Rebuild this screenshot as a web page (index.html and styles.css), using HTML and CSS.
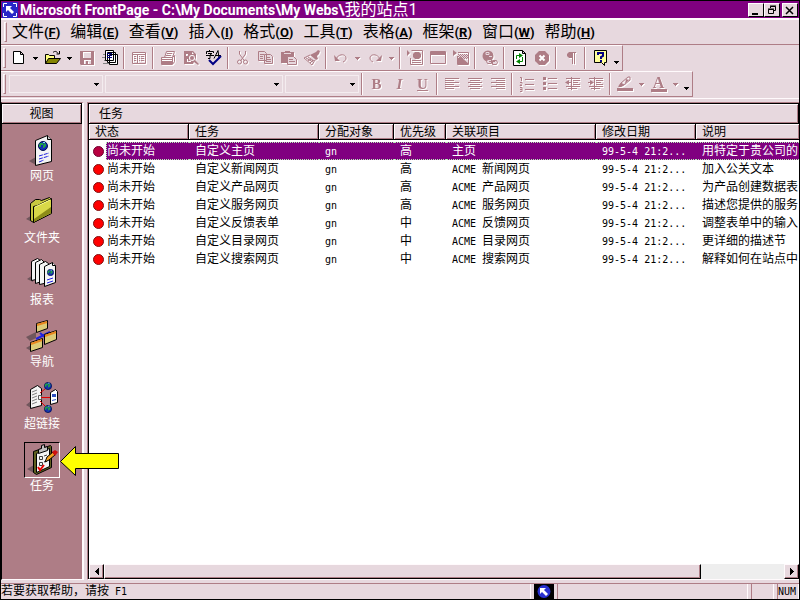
FILE: index.html
```html
<!DOCTYPE html>
<html lang="zh-CN">
<head>
<meta charset="utf-8">
<title>Microsoft FrontPage</title>
<link rel="stylesheet" href="styles.css">
</head>
<body>
<svg class="defs" aria-hidden="true">
  <symbol id="drop" viewBox="0 0 5 3"><path d="M0 0h5v1H4v1H3v1H2V2H1V1H0z" fill="currentColor"/></symbol>
  <symbol id="lefthead" viewBox="0 0 4 7"><path d="M3 0h1v7H3V6H2V5H1V4H0V3h1V2h1V1h1z" fill="currentColor"/></symbol>
  <symbol id="globe" viewBox="0 0 10 10"><circle cx="5" cy="5" r="4.500" fill="#1428b8" stroke="#001050"/><path d="M2 2h3v2H3v2H1V4zM6 2l2 1v2l-2 2H5V5zM3 7l2 1H4z" fill="#20a048"/><path d="M5 1h2v1H5z" fill="#8ce0ff"/></symbol>
</svg>
<div class="window">
  <header class="title">
    <svg class="appicon" viewBox="0 0 16 16"><path fill="#2828c8" d="M0 0h16v16H0z"/><path fill="none" stroke="#fff" d="M5 1.500H1.500V5M11 1.500h3.500V5M1.500 11v3.500H5M14.500 11v3.500H11"/><path fill="#fff" d="M4 4h6L8 6l4 4-2 2-4-4-2 2z"/></svg>
    <h1>Microsoft FrontPage - C:\My Documents\My Webs\<span>我的站点1</span></h1>
    <button class="cap" aria-label="最小化"><svg viewBox="0 0 12 11"><path d="M2 8h6v2H2z"/></svg></button>
    <button class="cap" aria-label="还原"><svg viewBox="0 0 12 11"><path fill="none" stroke="#000" d="M4.500 3V1.500h5v4H8M4 1h6M2.500 4.500h5v4h-5zM2 4h6"/></svg></button>
    <button class="cap close" aria-label="关闭"><svg viewBox="0 0 12 11"><path fill="none" stroke="#000" stroke-width="1.500" d="M2 2l7 7M9 2l-7 7"/></svg></button>
  </header>

  <nav class="menu">
    <i class="grip"></i>
    <button>文件<b>(<u>F</u>)</b></button><button>编辑<b>(<u>E</u>)</b></button><button>查看<b>(<u>V</u>)</b></button><button>插入<b>(<u>I</u>)</b></button><button>格式<b>(<u>O</u>)</b></button><button>工具<b>(<u>T</u>)</b></button><button>表格<b>(<u>A</u>)</b></button><button>框架<b>(<u>R</u>)</b></button><button>窗口<b>(<u>W</u>)</b></button><button>帮助<b>(<u>H</u>)</b></button>
  </nav>

  <div class="bar" role="toolbar">
    <i class="grip"></i>
    <button class="tool" aria-label="新建"><svg viewBox="0 0 16 16"><path fill="#fff" stroke="#000" d="M2.500 1.500h7l3 3v9h-10zM9.500 1.500v3h3"/></svg></button>
    <button class="arrow" aria-label="新建选项"><svg><use href="#drop"/></svg></button>
    <button class="tool" aria-label="打开"><svg viewBox="0 0 16 16"><path fill="#ffff80" stroke="#000" d="M.5 13.500v-9h3l1 1h5v3"/><path fill="#848400" stroke="#000" d="M.5 13.500l3-5h12l-4 5z"/><path fill="none" stroke="#000" d="M8 2.500c2-2 4-1 5 1M14.500 1v3h-3"/></svg></button>
    <button class="arrow" aria-label="打开选项"><svg><use href="#drop"/></svg></button>
    <button class="tool off" aria-label="保存"><svg viewBox="0 0 16 16"><path fill="currentColor" fill-rule="evenodd" d="M1 1h14v14H2l-1-1zM4 2v6h8V2zM5 10v4h2v-3h2v3h3v-4z"/></svg></button>
    <button class="tool" aria-label="发布"><svg viewBox="0 0 16 16"><path stroke="#848484" d="M1 4.500h4M0 7.500h4M2 10.500h4M1 13.500h6"/><path fill="#fff" stroke="#000" d="M7.500 4.500h8v10h-8zM5.500 2.500h8v10h-8zM3.500.5h8v10h-8z"/><path stroke="#000080" d="M5 3.500h5M5 5.500h5M5 7.500h5"/></svg></button>
    <i class="sep"></i>
    <button class="tool off" aria-label="文件夹列表"><svg viewBox="0 0 16 16"><path fill="none" stroke="currentColor" d="M1.500 2.500h13v11h-13zM1 4.500h14M6.500 4v9M3 6.500h2M3 8.500h2M3 10.500h2M8 6.500h1M10 6.500h3M8 8.500h1M10 8.500h3M8 10.500h1M10 10.500h3"/></svg></button>
    <i class="sep"></i>
    <button class="tool off" aria-label="打印"><svg viewBox="0 0 16 16"><path fill="none" stroke="currentColor" d="M4.500 7.500l2-6h8l-2 6M7 3.500h5M6 5.500h5M1.500 7.500h11l2-2v6l-2 3h-11zM1 9.500h12M12.500 8v6"/><path fill="currentColor" d="M2 11h10v3H2z"/></svg></button>
    <button class="tool off" aria-label="预览"><svg viewBox="0 0 16 16"><path fill="currentColor" fill-rule="evenodd" d="M1 1h9l3 3v4l-1 2 4 4-1 1-4-3-1 2H1zM9 2v2h2zM3 4h2v2H3zM3 9h1v3h4v-1H5V9zM9 5a3 3 0 1 0 .1 6A3 3 0 0 0 9 5z"/><circle cx="9" cy="8" r="2" fill="currentColor"/></svg></button>
    <button class="tool" aria-label="拼写检查"><svg viewBox="0 0 16 16"><path fill="none" stroke="#000" d="M3.500 0v2M.5 4V1.500h7V3M2 3.500h4L4 5v3.500H2M0 5.500h8M8 8.500l4-8 1 8M10 5.500h5"/><path fill="none" stroke="#000084" stroke-width="2" d="M3 10l4 4 8-8"/></svg></button>
    <i class="sep"></i>
    <button class="tool off" aria-label="剪切"><svg viewBox="0 0 16 16"><path fill="none" stroke="currentColor" d="M4.500 1v3l5 7M10.500 1v3l-5 7"/><circle cx="4.500" cy="12" r="2" fill="none" stroke="currentColor"/><circle cx="10.500" cy="12" r="2" fill="none" stroke="currentColor"/></svg></button>
    <button class="tool off" aria-label="复制"><svg viewBox="0 0 16 16"><path fill="#e7d8de" stroke="currentColor" d="M.5 1.500h6l2 2v7h-8zM6.500 4.500h6l2 2v7h-8z"/><path stroke="currentColor" d="M2 4.500h4M2 6.500h3M2 8.500h3M8 7.500h4M8 9.500h5M8 11.500h5"/></svg></button>
    <button class="tool off" aria-label="粘贴"><svg viewBox="0 0 16 16"><path fill="currentColor" d="M0 2h4V1h5v1h4v11H0z"/><path stroke="#e7d8de" d="M3 3.500h7"/><path fill="#e7d8de" stroke="currentColor" d="M6.500 6.500h6l3 3v5h-9z"/><path stroke="currentColor" d="M8 9.500h4M8 11.500h6"/></svg></button>
    <button class="tool off" aria-label="格式刷"><svg viewBox="0 0 16 16"><path fill="currentColor" d="M12 2l2-2 2 1-1 3-2 2 1 3-2 1-6-5 2-1z"/><path fill="none" stroke="currentColor" d="M6 5L0 8l8 7 3-5M2 8l7 4M4 7l6 4M4 11l3-2M6 13l3-3"/></svg></button>
    <i class="sep"></i>
    <button class="tool off" aria-label="撤消"><svg viewBox="0 0 16 16"><path fill="none" stroke="currentColor" d="M3 9c3-6 10-5 10-1 0 2-1 3-3 4"/><path fill="currentColor" d="M1 5l1 6h5z"/></svg></button>
    <button class="arrow off" aria-label="撤消选项"><svg><use href="#drop"/></svg></button>
    <button class="tool off" aria-label="恢复"><svg viewBox="0 0 16 16"><path fill="none" stroke="currentColor" d="M13 9C10 3 3 4 3 8c0 2 1 3 3 4"/><path fill="currentColor" d="M15 5l-1 6H9z"/></svg></button>
    <button class="arrow off" aria-label="恢复选项"><svg><use href="#drop"/></svg></button>
    <i class="sep"></i>
    <button class="tool off" aria-label="插入组件"><svg viewBox="0 0 16 16"><path fill="currentColor" d="M0 0l3 3-3 3z"/><path fill="none" stroke="currentColor" d="M4.500.5h11v14h-12V8M5 10.500h9M5 12.500h9"/><path fill="currentColor" d="M8 2h4l2 2v3l-2 2H8L6 7V4z"/></svg></button>
    <button class="tool off" aria-label="插入表格"><svg viewBox="0 0 16 16"><path fill="none" stroke="currentColor" d="M.5 1.500h15v12H.5z"/><path fill="currentColor" d="M1 2h14v3H1z"/></svg></button>
    <button class="tool off" aria-label="插入图片"><svg viewBox="0 0 16 16"><path fill="currentColor" d="M0 0l4 3-4 3z"/><path fill="none" stroke="currentColor" d="M5 2.500h10.500v12h-11V6"/><path fill="none" stroke="currentColor" stroke-dasharray="1 1" d="M5 4.500h10M6 5.500h10M5 6.500h10M6 7.500h10M5 8.500h10"/><path fill="currentColor" d="M5 8l3-1 7 6v1H5z"/></svg></button>
    <i class="sep"></i>
    <button class="tool off" aria-label="超链接"><svg viewBox="0 0 16 16"><circle cx="6" cy="6" r="5.500" fill="currentColor"/><path stroke="#e7d8de" fill="none" d="M4 2.500h3v2H4zM7 6.500h3"/><path fill="#e7d8de" stroke="currentColor" d="M5.500 9.500h4v4h-4l-1-2zM10.500 10.500h4l1 2-1 2h-4z"/><path stroke="currentColor" d="M7 11.500h6"/></svg></button>
    <i class="sep"></i>
    <button class="tool" aria-label="刷新"><svg viewBox="0 0 16 16"><path fill="#fff" stroke="#000" d="M2.500.5h9l3 3v12h-12zM11.500.5v3h3"/><path fill="none" stroke="#008400" d="M5.500 9V5.500H10M11.500 7v4.500H7"/><path fill="#008400" d="M8 3l4 2.500L8 8zM9 9l-4 2.500L9 14z"/></svg></button>
    <button class="tool off" aria-label="停止"><svg viewBox="0 0 16 16"><path fill="currentColor" d="M5 1h6l4 4v6l-4 4H5l-4-4V5z"/><path stroke="#fff" stroke-width="2" d="M5.500 5.500l5 5M10.500 5.500l-5 5"/></svg></button>
    <i class="sep"></i>
    <button class="tool off" aria-label="显示标记"><svg viewBox="0 0 16 16"><path fill="currentColor" d="M6 2h7v1h-1v11h-1V3h-1v11H9V8H6L4 6V4z"/></svg></button>
    <i class="sep"></i>
    <button class="tool" aria-label="帮助"><svg viewBox="0 0 16 16"><path fill="#ffff9c" stroke="#000" d="M2.500.5h12v12h-2v3l-3-3h-7z"/><path fill="none" stroke="#000084" stroke-width="2" d="M6 5V3h5v3L9 7v2M8 11h2"/></svg></button>
    <button class="arrow more" aria-label="其他按钮"><svg><use href="#drop"/></svg></button>
  </div>

  <div class="bar format" role="toolbar">
    <i class="grip"></i>
    <label class="combo style"><select aria-label="样式"><option></option></select><svg><use href="#drop"/></svg></label>
    <label class="combo face"><select aria-label="字体"><option></option></select><svg><use href="#drop"/></svg></label>
    <label class="combo size"><select aria-label="字号"><option></option></select><svg><use href="#drop"/></svg></label>
    <i class="sep"></i>
    <button class="tool off letter"><b>B</b></button>
    <button class="tool off letter"><em>I</em></button>
    <button class="tool off letter"><u>U</u></button>
    <i class="sep"></i>
    <button class="tool off" aria-label="左对齐"><svg viewBox="0 0 16 16"><path stroke="currentColor" d="M1 2.500h14M1 4.500h9M1 6.500h14M1 8.500h9M1 10.500h14M1 12.500h9"/></svg></button>
    <button class="tool off" aria-label="居中"><svg viewBox="0 0 16 16"><path stroke="currentColor" d="M1 2.500h14M3 4.500h10M1 6.500h14M3 8.500h10M1 10.500h14M3 12.500h10"/></svg></button>
    <button class="tool off" aria-label="右对齐"><svg viewBox="0 0 16 16"><path stroke="currentColor" d="M1 2.500h14M6 4.500h9M1 6.500h14M6 8.500h9M1 10.500h14M6 12.500h9"/></svg></button>
    <i class="sep"></i>
    <button class="tool off" aria-label="编号"><svg viewBox="0 0 16 16"><path fill="none" stroke="currentColor" d="M6 3.500h9M6 8.500h9M6 13.500h9M1 1.500h1.500V5M1 6.500h2v1L1 9.500h2M1 11.500h2v4H1M1 13.500h2"/></svg></button>
    <button class="tool off" aria-label="项目符号"><svg viewBox="0 0 16 16"><path fill="currentColor" d="M1 1h3v3H1zM1 6h3v3H1zM1 11h3v3H1zM6 2h9v1H6zM6 7h9v1H6zM6 12h9v1H6z"/></svg></button>
    <button class="tool off" aria-label="减少缩进"><svg viewBox="0 0 16 16"><path stroke="currentColor" d="M1 2.500h14M8 4.500h7M8 6.500h5M8 8.500h7M1 10.500h14M3 12.500h9M1 6.500h5M6.500 1v13"/><path fill="currentColor" d="M0 6.500L4 4v5z"/></svg></button>
    <button class="tool off" aria-label="增加缩进"><svg viewBox="0 0 16 16"><path stroke="currentColor" d="M1 2.500h14M8 4.500h7M8 6.500h5M8 8.500h7M1 10.500h14M3 12.500h9M0 6.500h5M6.500 1v13"/><path fill="currentColor" d="M6 6.500L2 4v5z"/></svg></button>
    <i class="sep"></i>
    <button class="tool off" aria-label="突出显示"><svg viewBox="0 0 16 16"><path fill="currentColor" d="M0 12h16v3H0z"/><path fill="none" stroke="currentColor" d="M4 7l7-6h2v3L7 9zM4 7l-2 3h3l2-1"/><path fill="currentColor" d="M4 7l3 2-3 2H1zM9 3l3 1-4 4z"/></svg></button>
    <button class="arrow off" aria-label="突出显示颜色"><svg><use href="#drop"/></svg></button>
    <button class="tool off fontcolor"><b>A</b></button>
    <button class="arrow off" aria-label="字体颜色"><svg><use href="#drop"/></svg></button>
    <button class="arrow more" aria-label="其他格式按钮"><svg><use href="#drop"/></svg></button>
  </div>

  <main class="work">
    <aside class="views">
      <h2>视图</h2>
      <nav>
        <button><span class="pic"><svg viewBox="0 0 32 32"><path fill="#70565c" d="M3 27l7-4v8z"/><path fill="#f4f4f4" stroke="#000" d="M9.500 6.500l12-5 4 4v22l-16 4z"/><path fill="#c8c8c8" stroke="#000" d="M21.500 1.500v4h4"/><use href="#globe" x="12" y="7" width="10" height="10"/><path stroke="#2020e0" stroke-dasharray="4 1" d="M13 22l10-3M13 25l10-3M13 28l5-2"/></svg></span>网页</button>
        <button><span class="pic"><svg viewBox="0 0 32 32"><path fill="#70565c" d="M0 23l6-4v7z"/><path fill="#c8c840" stroke="#000" d="M4.500 7.500l5-4h4l2 1 8-3 1 1v15L7.500 26.500l-3-2z"/><path fill="#d8d848" stroke="#000" d="M7.500 10.500l4-1 14-7v15l-18 9z"/><path fill="#8c8c18" d="M8 23l17-12v6L8 26z"/><path stroke="#ffff90" d="M9 11l15-7"/></svg></span>文件夹</button>
        <button><span class="pic"><svg viewBox="0 0 32 32"><path fill="#70565c" d="M1 21l6-4v7z"/><g fill="#f4f4f4" stroke="#000"><path d="M5.500 3.500l6-3 3 2v18l-9 2z"/><path d="M9.500 4.500l6-3 3 3v18l-9 3z"/><path d="M13.500 6.500l6-3 3 2v19l-9 2z"/><path d="M18.500 8.500l8-4 3 3v17l-11 4z"/><path d="M26.500 4.500v3h3"/></g><use href="#globe" x="21" y="11" width="7" height="7"/><path stroke="#2020e0" d="M21 22l6-2M21 25l6-2"/></svg></span>报表</button>
        <button><span class="pic"><svg viewBox="0 0 32 32"><path fill="#70565c" d="M0 17l10-5v6l-6 3zM0 28l5-3v6z"/><path fill="none" stroke="#2020e0" stroke-width="2" d="M10 19l14-7M14 13l6 5"/><g fill="#dccc78" stroke="#000"><path d="M10.500 3.500l11-3v8l-11 4zM18.500 14.500l12-4v9l-12 5zM4.500 22.500l12-4v9l-12 4z"/></g><path stroke="#e88820" stroke-width="2" d="M11 5l10-3M19 16l11-4M5 24l11-4"/></svg></span>导航</button>
        <button><span class="pic"><svg viewBox="0 0 32 32"><path fill="#70565c" d="M0 23l5-4v7z"/><path fill="#f4f4f4" stroke="#000" d="M4.500 7.500l7-4 4 3v17l-11 3z"/><path fill="#fff" stroke="#000" d="M24.500 10.500l5-3 2 2v11l-7 2z"/><path stroke="#808080" d="M6 10l5-2M6 13l5-2M6 16l5-2M6 19l5-2M6 22l5-2"/><path fill="none" stroke="#606060" d="M12.500 13.500h3v4h-3z"/><path fill="none" stroke="#e00000" d="M14 11l5-4M15 15.500h9M14 19l5 5"/><path fill="#3050c0" d="M26 12h4v3h-4zM26 18l4-1v1l-4 1z"/><use href="#globe" x="18" y="0" width="8" height="8"/><use href="#globe" x="18" y="23" width="8" height="8"/></svg></span>超链接</button>
        <button class="on"><span class="pic"><svg viewBox="0 0 32 32"><path fill="#70565c" d="M1 25l7-4v8z"/><path fill="#606020" stroke="#000" d="M7.500 7.500l17-6 1 1v21l-15 7-3-2z"/><path fill="#f4f4f4" stroke="#000" d="M10.500 9.500l13-5v18l-13 6z"/><path fill="#c0c0c0" stroke="#000" d="M12.500 5.500l3-1V1.500l3-1v3l3-1v4l-9 3z"/><path fill="none" stroke="#404040" d="M13.500 12.500h3v3h-3zM13.500 18.500h3v3h-3zM18 12l3-1M18 18l3-1"/><path fill="none" stroke="#f00000" stroke-width="2" d="M12 23l2 3 4-5"/><path fill="#f0a020" stroke="#000" d="M19 18l2-5 6-5 2 3-6 5z"/><path fill="#d01010" d="M26 8l3-2 3 2-3 4z"/></svg></span>任务
          <svg class="pointer" viewBox="0 0 60 32"><path fill="#ff0" stroke="#000" d="M.5 15.500L15.500.5v7h43v15h-43v7z"/></svg></button>
      </nav>
    </aside>

    <section class="tasks">
      <h2>任务</h2>
      <div class="list">
        <table>
          <colgroup><col class="c1"><col class="c2"><col class="c3"><col class="c4"><col class="c5"><col class="c6"><col></colgroup>
          <thead><tr><th>状态</th><th>任务</th><th>分配对象</th><th>优先级</th><th>关联项目</th><th>修改日期</th><th>说明</th></tr></thead>
          <tbody>
            <tr class="sel"><td><div class="state"><i class="dot"></i><span>尚未开始</span></div></td><td>自定义主页</td><td><kbd>gn</kbd></td><td>高</td><td>主页</td><td><kbd>99-5-4 21:2...</kbd></td><td>用特定于贵公司的</td></tr>
            <tr><td><div class="state"><i class="dot"></i><span>尚未开始</span></div></td><td>自定义新闻网页</td><td><kbd>gn</kbd></td><td>高</td><td><kbd>ACME </kbd>新闻网页</td><td><kbd>99-5-4 21:2...</kbd></td><td>加入公关文本</td></tr>
            <tr><td><div class="state"><i class="dot"></i><span>尚未开始</span></div></td><td>自定义产品网页</td><td><kbd>gn</kbd></td><td>高</td><td><kbd>ACME </kbd>产品网页</td><td><kbd>99-5-4 21:2...</kbd></td><td>为产品创建数据表</td></tr>
            <tr><td><div class="state"><i class="dot"></i><span>尚未开始</span></div></td><td>自定义服务网页</td><td><kbd>gn</kbd></td><td>高</td><td><kbd>ACME </kbd>服务网页</td><td><kbd>99-5-4 21:2...</kbd></td><td>描述您提供的服务</td></tr>
            <tr><td><div class="state"><i class="dot"></i><span>尚未开始</span></div></td><td>自定义反馈表单</td><td><kbd>gn</kbd></td><td>中</td><td><kbd>ACME </kbd>反馈网页</td><td><kbd>99-5-4 21:2...</kbd></td><td>调整表单中的输入</td></tr>
            <tr><td><div class="state"><i class="dot"></i><span>尚未开始</span></div></td><td>自定义目录网页</td><td><kbd>gn</kbd></td><td>中</td><td><kbd>ACME </kbd>目录网页</td><td><kbd>99-5-4 21:2...</kbd></td><td>更详细的描述节</td></tr>
            <tr><td><div class="state"><i class="dot"></i><span>尚未开始</span></div></td><td>自定义搜索网页</td><td><kbd>gn</kbd></td><td>中</td><td><kbd>ACME </kbd>搜索网页</td><td><kbd>99-5-4 21:2...</kbd></td><td>解释如何在站点中</td></tr>
          </tbody>
        </table>
      </div>
      <div class="scroll">
        <button aria-label="向左滚动"><svg viewBox="0 0 4 7"><use href="#lefthead"/></svg></button>
        <i class="thumb"></i>
        <i class="track"></i>
        <button class="right" aria-label="向右滚动"><svg viewBox="0 0 4 7"><use href="#lefthead"/></svg></button>
      </div>
    </section>
  </main>

  <footer class="status">
    <p class="message">若要获取帮助，请按<kbd> F1</kbd></p>
    <svg class="online" viewBox="0 0 20 15"><path d="M0 0h20v15H0z"/><circle cx="10" cy="7.500" r="6.500" fill="#2830d0"/><path fill="#fff" d="M6 4h6l-2 2 4 4-2 2-4-4-2 2z"/></svg>
    <p class="wide"></p>
    <p class="narrow"></p>
    <p class="num"><kbd>NUM</kbd></p>
  </footer>
</div>
</body>
</html>
```
FILE: styles.css
```css
:root {
  --face: #e7d8de;
  --shade: #ae7d86;
  --light: #fffafc;
  --purple: #800080;
  --focus: #b8f0b8;
}

* { box-sizing: border-box; }

body {
  margin: 0;
  font: 12px/16px "Liberation Sans", "Noto Sans CJK SC", sans-serif;
  color: #000;
}

h1, h2, p { margin: 0; font-size: 12px; font-weight: 400; }
svg { display: block; }
kbd { font: 10px/10px "DejaVu Sans Mono", monospace; white-space: pre; }

button {
  margin: 0;
  padding: 0;
  border: 0;
  background: none;
  color: inherit;
  font: inherit;
}

.defs { position: absolute; width: 0; height: 0; }

.window {
  display: flex;
  flex-direction: column;
  height: 100vh;
  border: 1px solid #000;
  background: var(--face);
  overflow: hidden;
}

/* Title bar */
.title {
  display: flex;
  align-items: center;
  flex: none;
  height: 17px;
  padding: 0 1px;
  background: var(--purple);
  color: #fff;
}
.appicon { width: 16px; height: 16px; margin-right: 2px; }
.title h1 {
  flex: 1;
  font: 700 14px/17px Roboto, "Noto Sans CJK SC", sans-serif;
  white-space: nowrap;
  overflow: hidden;
}
.title h1 span { font-size: 16px; font-weight: 400; }
.cap {
  display: flex;
  width: 16px;
  height: 14px;
  padding: 1px;
  background: var(--face);
  border: 1px solid;
  border-color: #fff #000 #000 #fff;
}
.cap svg { width: 12px; height: 11px; }
.close { margin-left: 2px; }

/* Menu */
.menu {
  display: flex;
  align-items: center;
  flex: none;
  gap: 10px;
  height: 27px;
  padding-left: 3px;
  border-top: 2px solid var(--light);
  border-bottom: 1px solid var(--shade);
}
.menu button { font-size: 16px; line-height: 24px; white-space: nowrap; }
.menu b { font-family: Roboto, sans-serif; font-size: 13px; }
.grip {
  flex: none;
  width: 3px;
  height: 20px;
  border: 1px solid;
  border-color: var(--light) var(--shade) var(--shade) var(--light);
}
.menu .grip { margin-right: -5px; }

/* Toolbars */
.bar {
  display: flex;
  align-items: center;
  align-self: flex-start;
  flex: none;
  height: 26px;
  padding-left: 2px;
  border: solid;
  border-width: 1px 1px 1px 0;
  border-color: var(--light) var(--shade) var(--shade);
}
.bar .grip { margin-right: 1px; }
.tool {
  display: flex;
  align-items: center;
  justify-content: center;
  flex: none;
  width: 23px;
  height: 22px;
}
.tool svg { width: 16px; height: 16px; }
.off { color: var(--shade); filter: drop-shadow(1px 1px 0 #fff); }
.arrow { flex: none; width: 11px; height: 22px; padding-left: 3px; }
.arrow svg, .combo svg { width: 5px; height: 3px; }
.arrow.more { padding-top: 8px; }
.sep {
  flex: none;
  width: 2px;
  height: 22px;
  margin: 0 2px;
  background: linear-gradient(90deg, var(--shade) 50%, var(--light) 50%);
}
.letter { font: 15px/18px "Liberation Serif", serif; }
.letter em { font-weight: 700; }
.letter u { font-weight: 700; }
.fontcolor { font: 16px/12px "Liberation Serif", serif; }
.fontcolor b { width: 16px; border-bottom: 3px solid var(--shade); }

.combo {
  display: grid;
  align-items: center;
  flex: none;
  height: 18px;
  margin-right: 2px;
}
.combo select, .combo svg { grid-area: 1 / 1; }
.combo select {
  appearance: none;
  width: 100%;
  height: 18px;
  border: 1px solid #f4ecef;
  border-radius: 0;
  background: var(--face);
}
.combo svg { justify-self: end; margin-right: 4px; pointer-events: none; }
.format .grip { margin-right: 3px; }
.style { width: 94px; }
.face { width: 178px; }
.size { width: 74px; margin-right: 0; }

/* Work area */
.work {
  display: flex;
  flex: 1;
  min-height: 0;
  margin-top: 1px;
  padding-bottom: 3px;
  border-top: 1px solid var(--light);
  border-bottom: 1px solid var(--shade);
}
.views {
  flex: none;
  display: flex;
  flex-direction: column;
  width: 83px;
  margin-top: 3px;
  border: solid;
  border-width: 1px 2px 1px 1px;
  border-color: var(--shade) var(--light) var(--light) #000;
  background: var(--shade);
}
.views h2, .tasks h2 {
  height: 21px;
  line-height: 20px;
  background: var(--face);
  border: 1px solid #000;
  box-shadow: inset 1px 1px 0 var(--light), inset -1px -1px 0 var(--shade);
}
.views h2 { border-left: 0; text-align: center; }
.views nav { padding-top: 3px; }
.views button {
  position: relative;
  display: block;
  width: 100%;
  height: 62px;
  color: #fff;
  line-height: 16px;
  text-align: center;
}
.pic { display: block; width: 36px; height: 36px; margin: 0 auto; border: 1px solid transparent; padding: 1px; }
.pic svg { width: 32px; height: 32px; }
.on .pic { border-color: #000 #fff #fff #000; }
.pointer { position: absolute; top: 9px; left: 58px; width: 60px; height: 32px; z-index: 1; }

.tasks {
  flex: 1;
  display: flex;
  flex-direction: column;
  min-width: 0;
  margin: 3px 0 0 3px;
  border: solid;
  border-width: 1px 0 1px 1px;
  border-color: var(--shade) var(--light) var(--light) var(--shade);
}
.tasks h2 { padding-left: 10px; }
.list { flex: 1; min-height: 0; overflow: hidden; background: #fff; border-left: 1px solid #000; }
table { width: 100%; table-layout: fixed; border-collapse: separate; border-spacing: 0; }
.c1 { width: 100px; }
.c2 { width: 130px; }
.c3 { width: 75px; }
.c4 { width: 52px; }
.c5 { width: 150px; }
.c6 { width: 100px; }
th, td { padding: 0 0 0 6px; text-align: left; white-space: nowrap; overflow: hidden; font-weight: 400; }
th {
  height: 16px;
  padding-top: 1px;
  line-height: 14px;
  background: var(--face);
  border-bottom: 1px solid #000;
  border-right: 1px solid #000;
  box-shadow: inset 1px 1px 0 var(--light), inset -1px -1px 0 var(--shade);
}
th:last-child { border-right: 0; }
tbody::before { content: ""; display: block; height: 2px; }
td { height: 18px; line-height: 16px; border: solid transparent; border-width: 1px 0; }
td:first-child { padding: 0; border-width: 0; }
.state { display: flex; align-items: center; height: 18px; padding-left: 4px; }
.state span { flex: 1; margin-left: 2px; border: dotted transparent; border-width: 1px 0 1px 1px; }
.dot {
  flex: none;
  width: 11px;
  height: 11px;
  border: 1px solid #801010;
  border-radius: 50%;
  background: #f00;
}
.sel { color: #fff; }
.sel td + td, .sel span { background: var(--purple); }
.sel td + td { border: dotted var(--focus); border-width: 1px 0; }
.sel .state span { border-color: var(--focus); }
.sel .dot { background: #b80040; border-color: #700030; }

.scroll { display: flex; flex: none; height: 15px; background: #eee; border-left: 1px solid #000; }
.scroll button, .thumb {
  background: var(--face);
  border: 1px solid;
  border-color: var(--light) #000 #000 var(--light);
  box-shadow: inset -1px -1px 0 var(--shade);
}
.scroll button { display: flex; align-items: center; justify-content: center; flex: none; width: 15px; }
.scroll svg { width: 4px; height: 7px; }
.right svg { transform: scaleX(-1); }
.thumb { flex: 597 1 0; }
.track { flex: 83 1 0; }

/* Status bar */
.status { display: flex; flex: none; height: 15px; gap: 3px; }
.status p { border: solid; border-width: 0 1px 0 1px; border-color: var(--light) var(--light) var(--light) var(--shade); line-height: 15px; white-space: nowrap; }
.message { flex: 531 1 0; }
.status .message { border-left: 0; }
.online { flex: none; width: 20px; height: 15px; }
.wide { flex: 190 1 0; }
.narrow { flex: none; width: 23px; }
.num { flex: none; width: 22px; }
```
